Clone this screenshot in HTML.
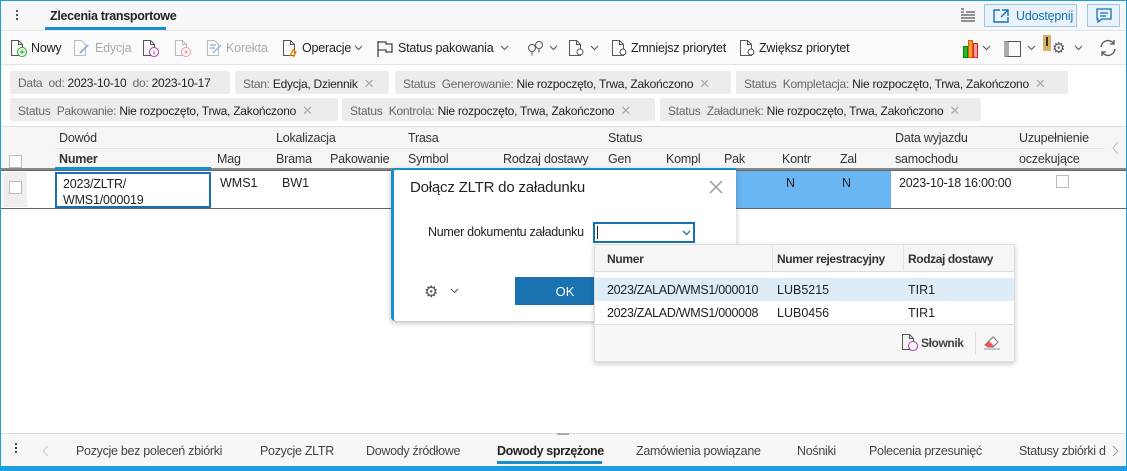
<!DOCTYPE html><html><head><meta charset="utf-8"><style>
*{box-sizing:border-box;margin:0;padding:0}
body{width:1127px;height:471px;overflow:hidden;font-family:"Liberation Sans",sans-serif;font-size:13px;color:#222;background:#fff;position:relative}
.a{position:absolute;white-space:nowrap}
.tb{position:absolute;white-space:nowrap;font-size:12.5px;letter-spacing:-0.2px;top:41px}
.chip{position:absolute;height:23px;background:#ececec;border-radius:2px;padding:5px 8px;color:#666;font-size:12px;letter-spacing:-0.25px;white-space:nowrap;overflow:hidden}
.chip b{font-weight:normal;color:#222}
.chip i{font-style:normal;color:#aaa;margin-left:6px;font-size:13px}
.h{position:absolute;color:#333;font-size:12.5px;letter-spacing:-0.2px}
.cb{position:absolute;width:13px;height:13px;border:1px solid #bbb;background:#fff}
svg{position:absolute}
</style></head><body>
<div class="a" style="left:0;top:0;width:1127px;height:471px;border:1px solid #1a9ee0;border-bottom:5px solid #1a9ee0"></div>
<!-- title bar -->
<div class="a" style="left:1px;top:1px;width:1125px;height:30px;background:#f7f7f7;border-bottom:1px solid #e4e4e4"></div>
<div class="a" style="left:16px;top:10px;width:2px;height:2px;background:#555;box-shadow:0 4px #555,0 8px #555"></div>
<div class="a" style="left:50px;top:9px;font-weight:bold;font-size:12.5px;letter-spacing:-0.3px">Zlecenia transportowe</div>
<div class="a" style="left:45px;top:27px;width:121px;height:3px;background:#1a8fd0"></div>
<svg style="left:960px;top:8px" width="16" height="14"><path d="M1 1h3M1 4h3M6 4h9M1 7h14M1 10h14M1 13h14" stroke="#555" stroke-width="1.3"/></svg>
<div class="a" style="left:984px;top:4px;width:93px;height:23px;border:1px solid #9cc8e4;background:#e8f2fa;color:#1a6fb5;padding:4px 0 0 31px;font-size:12.5px;letter-spacing:-0.2px">Udostępnij</div>
<svg style="left:992px;top:7px" width="20" height="17"><path d="M8 3H2v12h14v-5M10 3h6v6M16 3l-7 7" fill="none" stroke="#1a6fb5" stroke-width="1.4"/></svg>
<div class="a" style="left:1087px;top:4px;width:33px;height:23px;border:1px solid #9cc8e4;background:#e8f2fa"></div>
<svg style="left:1096px;top:8px" width="16" height="16"><path d="M1 1h14v10H6l-4 3v-3H1z M4 5h8M4 8h6" fill="none" stroke="#1a6fb5" stroke-width="1.3"/></svg>
<!-- toolbar -->
<div class="a" style="left:1px;top:32px;width:1125px;height:33px;background:#fafafa;border-bottom:1px solid #e4e4e4"></div>
<svg style="left:10px;top:39px" width="18" height="19"><path d="M1.5 1.5h7l4 4v11h-11z M8.5 1.5v4h4" fill="none" stroke="#555"/><circle cx="12" cy="13" r="4.5" fill="#fff" stroke="#2a2"/><path d="M12 10.5v5M9.5 13h5" stroke="#2a2"/></svg>
<div class="tb" style="left:31px">Nowy</div>
<svg style="left:73px;top:39px" width="18" height="19"><path d="M1.5 1.5h7l4 4v11h-11z" fill="none" stroke="#bbb"/><path d="M7 14l8-8" stroke="#9bd" stroke-width="2"/></svg>
<div class="tb" style="left:95px;color:#aaa">Edycja</div>
<svg style="left:142px;top:39px" width="18" height="19"><path d="M1.5 1.5h7l4 4v11h-11z M8.5 1.5v4h4" fill="none" stroke="#555"/><circle cx="12" cy="13" r="4.5" fill="#fff" stroke="#a3a"/><path d="M12 11v.5M12 12.5v3" stroke="#a3a"/></svg>
<svg style="left:174px;top:39px" width="18" height="19"><path d="M1.5 1.5h7l4 4v11h-11z M8.5 1.5v4h4" fill="none" stroke="#bbb"/><circle cx="12" cy="13" r="4.5" fill="#fff" stroke="#e99"/><path d="M10.5 11.5l3 3M13.5 11.5l-3 3" stroke="#e99"/></svg>
<svg style="left:206px;top:39px" width="18" height="19"><path d="M1.5 1.5h7l4 4v11h-11z" fill="none" stroke="#bbb"/><path d="M4 6h6M4 9h5M7 14l8-8" stroke="#9bd" stroke-width="1.5"/></svg>
<div class="tb" style="left:226px;color:#aaa">Korekta</div>
<svg style="left:282px;top:39px" width="18" height="19"><path d="M1.5 1.5h7l4 4v11h-11z M8.5 1.5v4h4" fill="none" stroke="#555"/><path d="M8 17l3-6 3 2-3 5" fill="none" stroke="#e80" stroke-width="1.4"/></svg>
<div class="tb" style="left:302px">Operacje</div>
<svg style="left:354px;top:44px" width="10" height="8"><path d="M1 2l3.5 3.5L8 2" fill="none" stroke="#555"/></svg>
<svg style="left:376px;top:39px" width="18" height="19"><path d="M2 18V2M2 3h8v2h6v8H10v-2H2" fill="none" stroke="#444" stroke-width="1.3"/></svg>
<div class="tb" style="left:398px">Status pakowania</div>
<svg style="left:500px;top:44px" width="10" height="8"><path d="M1 2l3.5 3.5L8 2" fill="none" stroke="#555"/></svg>
<svg style="left:526px;top:39px" width="20" height="19"><circle cx="6" cy="9" r="3.5" fill="none" stroke="#555"/><circle cx="13" cy="6" r="3.5" fill="none" stroke="#555"/><path d="M6 12.5v4M13 9.5v4" stroke="#555"/></svg>
<svg style="left:549px;top:44px" width="10" height="8"><path d="M1 2l3.5 3.5L8 2" fill="none" stroke="#555"/></svg>
<svg style="left:568px;top:39px" width="18" height="19"><path d="M1.5 1.5h7l4 4v11h-11z M8.5 1.5v4h4" fill="none" stroke="#555"/><circle cx="12" cy="13" r="3" fill="#fff" stroke="#555"/></svg>
<svg style="left:590px;top:44px" width="10" height="8"><path d="M1 2l3.5 3.5L8 2" fill="none" stroke="#555"/></svg>
<svg style="left:611px;top:39px" width="18" height="19"><path d="M1.5 1.5h7l4 4v11h-11z M8.5 1.5v4h4" fill="none" stroke="#555"/><circle cx="12" cy="13" r="3" fill="#fff" stroke="#555"/></svg>
<div class="tb" style="left:631px">Zmniejsz priorytet</div>
<svg style="left:739px;top:39px" width="18" height="19"><path d="M1.5 1.5h7l4 4v11h-11z M8.5 1.5v4h4" fill="none" stroke="#555"/><circle cx="12" cy="13" r="3" fill="#fff" stroke="#555"/></svg>
<div class="tb" style="left:759px">Zwiększ priorytet</div>
<div class="a" style="left:963px;top:46px;width:5px;height:12px;background:#2b2;border:1px solid #080"></div>
<div class="a" style="left:968px;top:40px;width:5px;height:18px;background:#f93;border:1px solid #c60"></div>
<div class="a" style="left:973px;top:43px;width:5px;height:15px;background:#f99;border:1px solid #d22"></div>
<svg style="left:982px;top:44px" width="10" height="8"><path d="M1 2l3.5 3.5L8 2" fill="none" stroke="#555"/></svg>
<div class="a" style="left:1004px;top:41px;width:17px;height:16px;border:1px solid #555;border-left:5px solid #aaa"></div>
<svg style="left:1027px;top:44px" width="10" height="8"><path d="M1 2l3.5 3.5L8 2" fill="none" stroke="#555"/></svg>
<div class="a" style="left:1043px;top:35px;width:8px;height:16px;background:#d9b060"></div>
<div class="a" style="left:1046px;top:37px;width:2px;height:9px;background:#333"></div>
<div class="a" style="left:1052px;top:39px;color:#555;font-size:15px">⚙</div>
<svg style="left:1074px;top:44px" width="10" height="8"><path d="M1 2l3.5 3.5L8 2" fill="none" stroke="#555"/></svg>
<svg style="left:1098px;top:38px" width="20" height="20"><path d="M3 9a7 7 0 0 1 13-3M17 11a7 7 0 0 1-13 3M16 2v4h-4M4 18v-4h4" fill="none" stroke="#555" stroke-width="1.3"/></svg>
<!-- filters -->
<div class="chip" style="left:10px;top:71px;width:220px">Data &nbsp;od: <b>2023-10-10</b> &nbsp;do: <b>2023-10-17</b></div>
<div class="chip" style="left:235px;top:71px;width:154px">Stan: <b>Edycja, Dziennik</b><i>✕</i></div>
<div class="chip" style="left:395px;top:71px;width:336px">Status &nbsp;Generowanie: <b>Nie rozpoczęto, Trwa, Zakończono</b><i>✕</i></div>
<div class="chip" style="left:736px;top:71px;width:332px">Status &nbsp;Kompletacja: <b>Nie rozpoczęto, Trwa, Zakończono</b><i>✕</i></div>
<div class="chip" style="left:10px;top:98px;width:328px">Status &nbsp;Pakowanie: <b>Nie rozpoczęto, Trwa, Zakończono</b><i>✕</i></div>
<div class="chip" style="left:342px;top:98px;width:313px">Status &nbsp;Kontrola: <b>Nie rozpoczęto, Trwa, Zakończono</b><i>✕</i></div>
<div class="chip" style="left:660px;top:98px;width:321px">Status &nbsp;Załadunek: <b>Nie rozpoczęto, Trwa, Zakończono</b><i>✕</i></div>
<!-- table header -->
<div class="a" style="left:1px;top:126px;width:1125px;height:44px;background:#f5f5f5;border-top:1px solid #ddd;border-bottom:2px solid #888"></div>
<div class="a" style="left:55px;top:148px;width:1050px;height:1px;background:#e4e4e4"></div>
<div class="a" style="left:55px;top:167px;width:156px;height:3px;background:#1a8fd0"></div>
<div class="cb" style="left:9px;top:155px"></div>
<div class="h" style="left:59px;top:131px">Dowód</div>
<div class="h" style="left:276px;top:131px">Lokalizacja</div>
<div class="h" style="left:408px;top:131px">Trasa</div>
<div class="h" style="left:608px;top:131px">Status</div>
<div class="h" style="left:895px;top:131px">Data wyjazdu</div>
<div class="h" style="left:1019px;top:131px">Uzupełnienie</div>
<div class="h" style="left:59px;top:152px;font-weight:bold">Numer</div>
<div class="h" style="left:217px;top:152px">Mag</div>
<div class="h" style="left:276px;top:152px">Brama</div>
<div class="h" style="left:330px;top:152px">Pakowanie</div>
<div class="h" style="left:408px;top:152px">Symbol</div>
<div class="h" style="left:503px;top:152px">Rodzaj dostawy</div>
<div class="h" style="left:608px;top:152px">Gen</div>
<div class="h" style="left:666px;top:152px">Kompl</div>
<div class="h" style="left:724px;top:152px">Pak</div>
<div class="h" style="left:782px;top:152px">Kontr</div>
<div class="h" style="left:840px;top:152px">Zal</div>
<div class="h" style="left:895px;top:152px">samochodu</div>
<div class="h" style="left:1019px;top:152px">oczekujące</div>
<svg style="left:1112px;top:141px" width="8" height="14"><path d="M6 1L1 7l5 6" fill="none" stroke="#bbb"/></svg>
<!-- row -->
<div class="a" style="left:1px;top:170px;width:1125px;height:39px;border-top:1px solid #666;border-bottom:1px solid #666"></div>
<div class="a" style="left:3px;top:172px;width:24px;height:35px;background:#eee"></div>
<div class="cb" style="left:9px;top:181px"></div>
<div class="a" style="left:735px;top:171px;width:156px;height:37px;background:#6ab6f2"></div>
<div class="a" style="left:55px;top:172px;width:156px;height:36px;border:2px solid #1a70b0"></div>
<div class="a" style="left:63px;top:176px;font-size:12.5px;line-height:16px;letter-spacing:-0.2px">2023/ZLTR/<br>WMS1/000019</div>
<div class="a" style="left:220px;top:176px;font-size:12.5px">WMS1</div>
<div class="a" style="left:282px;top:176px;font-size:12.5px">BW1</div>
<div class="a" style="left:786px;top:176px;font-size:12.5px">N</div>
<div class="a" style="left:842px;top:176px;font-size:12.5px">N</div>
<div class="a" style="left:899px;top:176px;font-size:12.5px;letter-spacing:-0.2px">2023-10-18 16:00:00</div>
<div class="cb" style="left:1056px;top:175px"></div>
<!-- dialog -->
<div class="a" style="left:391px;top:168px;width:345px;height:153px;background:#fff;border-top:2px solid #1a8fd0;border-left:3px solid #1a8fd0;border-radius:4px 0 0 4px;box-shadow:0 2px 6px rgba(0,0,0,.25)"></div>
<div class="a" style="left:410px;top:179px;font-size:15px;color:#222;letter-spacing:-0.2px">Dołącz ZLTR do załadunku</div>
<svg style="left:709px;top:180px" width="14" height="14"><path d="M1 1l12 12M13 1L1 13" stroke="#999" stroke-width="1.4"/></svg>
<div class="a" style="left:428px;top:225px;font-size:12.5px;letter-spacing:-0.3px">Numer dokumentu załadunku</div>
<div class="a" style="left:593px;top:222px;width:102px;height:21px;border:2px solid #1a70b0;background:#fff"></div>
<div class="a" style="left:597px;top:226px;width:1px;height:13px;background:#222"></div>
<svg style="left:682px;top:229px" width="10" height="8"><path d="M1 2l3.5 3.5L8 2" fill="none" stroke="#1a70b0" stroke-width="1.3"/></svg>
<div class="a" style="left:424px;top:282px;font-size:16px;color:#555">⚙</div>
<svg style="left:450px;top:287px" width="10" height="8"><path d="M1 2l3.5 3.5L8 2" fill="none" stroke="#555"/></svg>
<div class="a" style="left:515px;top:277px;width:100px;height:28px;background:#1a72b0;color:#fff;text-align:center;padding-top:7px;font-size:13px">OK</div>
<!-- dropdown -->
<div class="a" style="left:594px;top:244px;width:421px;height:118px;background:#fff;border:1px solid #ddd;box-shadow:0 2px 5px rgba(0,0,0,.2)"></div>
<div class="a" style="left:595px;top:245px;width:419px;height:27px;background:#f5f5f5;border-bottom:1px solid #ddd"></div>
<div class="a" style="left:607px;top:252px;font-weight:bold;font-size:12px;color:#333;letter-spacing:-0.3px">Numer</div>
<div class="a" style="left:772px;top:245px;width:1px;height:27px;background:#e4e4e4"></div>
<div class="a" style="left:777px;top:252px;font-weight:bold;font-size:12px;color:#333;letter-spacing:-0.4px">Numer rejestracyjny</div>
<div class="a" style="left:903px;top:245px;width:1px;height:27px;background:#e4e4e4"></div>
<div class="a" style="left:908px;top:252px;font-weight:bold;font-size:12px;color:#333;letter-spacing:-0.4px">Rodzaj dostawy</div>
<div class="a" style="left:595px;top:278px;width:419px;height:23px;background:#ddecf7"></div>
<div class="a" style="left:607px;top:283px;font-size:12.5px;letter-spacing:-0.3px">2023/ZALAD/WMS1/000010</div>
<div class="a" style="left:777px;top:283px;font-size:12.5px">LUB5215</div>
<div class="a" style="left:908px;top:283px;font-size:12.5px">TIR1</div>
<div class="a" style="left:607px;top:306px;font-size:12.5px;letter-spacing:-0.3px">2023/ZALAD/WMS1/000008</div>
<div class="a" style="left:777px;top:306px;font-size:12.5px">LUB0456</div>
<div class="a" style="left:908px;top:306px;font-size:12.5px">TIR1</div>
<div class="a" style="left:595px;top:324px;width:419px;height:37px;background:#f7f7f7;border-top:1px solid #ddd"></div>
<svg style="left:901px;top:333px" width="18" height="19"><path d="M1.5 1.5h7l4 4v11h-11z M8.5 1.5v4h4" fill="none" stroke="#555"/><circle cx="12" cy="13" r="4.5" fill="#fff" stroke="#a3a"/></svg>
<div class="a" style="left:921px;top:336px;font-size:12px;font-weight:bold;color:#444;letter-spacing:-0.4px">Słownik</div>
<div class="a" style="left:975px;top:332px;width:1px;height:22px;background:#ddd"></div>
<svg style="left:982px;top:333px" width="20" height="18"><path d="M3 12l8-8 5 5-5 5H6z" fill="#fff" stroke="#777"/><path d="M3 12l4-4 5 5-1 1H6z" fill="#e55"/><path d="M2 16h16" stroke="#999"/></svg>
<!-- bottom tabs -->
<div class="a" style="left:1px;top:433px;width:1125px;height:33px;background:#f7f7f7;border-top:1px solid #ddd"></div>
<div class="a" style="left:557px;top:433px;width:12px;height:2px;border-top:1px solid #aaa;border-bottom:1px solid #aaa"></div>
<div class="a" style="left:15px;top:443px;width:2px;height:2px;background:#444;box-shadow:0 4px #444,0 8px #444"></div>
<svg style="left:42px;top:445px" width="8" height="12"><path d="M6 1L1 6l5 5" fill="none" stroke="#ccc"/></svg>
<div class="a" style="left:76px;top:444px;font-size:12.5px;color:#444;letter-spacing:-0.3px">Pozycje bez poleceń zbiórki</div>
<div class="a" style="left:260px;top:444px;font-size:12.5px;color:#444;letter-spacing:-0.3px">Pozycje ZLTR</div>
<div class="a" style="left:366px;top:444px;font-size:12.5px;color:#444;letter-spacing:-0.3px">Dowody źródłowe</div>
<div class="a" style="left:497px;top:444px;font-size:12.5px;font-weight:bold;letter-spacing:-0.4px">Dowody sprzężone</div>
<div class="a" style="left:497px;top:461px;width:105px;height:3px;background:#1a8fd0"></div>
<div class="a" style="left:636px;top:444px;font-size:12.5px;color:#444;letter-spacing:-0.3px">Zamówienia powiązane</div>
<div class="a" style="left:797px;top:444px;font-size:12.5px;color:#444;letter-spacing:-0.3px">Nośniki</div>
<div class="a" style="left:869px;top:444px;font-size:12.5px;color:#444;letter-spacing:-0.3px">Polecenia przesunięć</div>
<div class="a" style="left:1019px;top:444px;font-size:12.5px;color:#444;width:87px;overflow:hidden;letter-spacing:-0.3px">Statusy zbiórki dla</div>
<svg style="left:1112px;top:445px" width="8" height="12"><path d="M1 1l5 5-5 5" fill="none" stroke="#999"/></svg>
</body></html>
